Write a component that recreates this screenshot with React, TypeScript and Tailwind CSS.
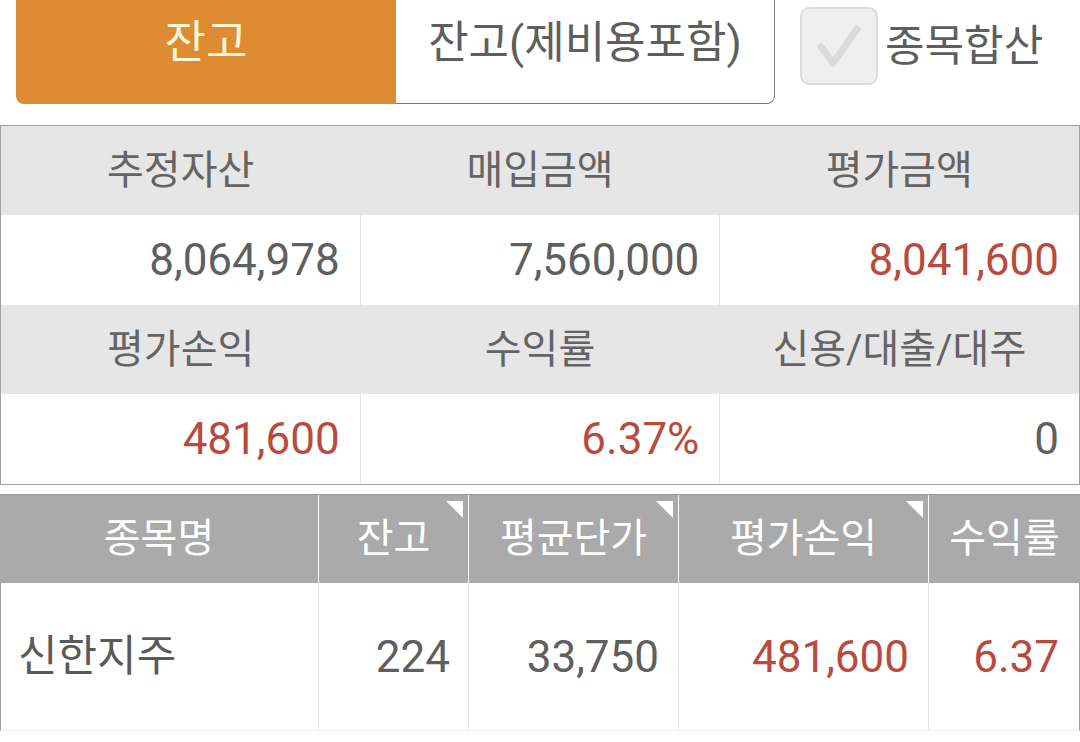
import React from 'react'

const RED = 'text-[#b84b3e]'

const summary = [
  [
    { label: '추정자산', value: '8,064,978', red: false },
    { label: '매입금액', value: '7,560,000', red: false },
    { label: '평가금액', value: '8,041,600', red: true },
  ],
  [
    { label: '평가손익', value: '481,600', red: true },
    { label: '수익률', value: '6.37%', red: true },
    { label: '신용/대출/대주', value: '0', red: false },
  ],
]

const columns = [
  { label: '종목명', width: 'w-[319px]', sort: false },
  { label: '잔고', width: 'w-[150px]', sort: true },
  { label: '평균단가', width: 'w-[210px]', sort: true },
  { label: '평가손익', width: 'w-[250px]', sort: true },
  { label: '수익률', width: 'flex-1', sort: false },
]

const rows = [
  { name: '신한지주', qty: '224', avg: '33,750', pl: '481,600', rate: '6.37' },
]

function SortMark() {
  return (
    <svg className="absolute right-[5px] top-[6px]" width="17" height="17" viewBox="0 0 17 17">
      <polygon points="0,0 17,0 17,17" fill="#ffffff" />
    </svg>
  )
}

export default function App() {
  return (
    <div className="w-[1080px] h-[742px] overflow-hidden bg-white font-['Roboto','Noto_Sans_CJK_KR',sans-serif] text-[#666666]">
      {/* Top tabs */}
      <div className="flex items-start h-[104px]">
        <div className="ml-[16px] flex h-[104px] w-[759px]">
          <div className="flex w-[380px] items-center justify-center rounded-bl-[8px] bg-[#dd8c31] pb-[18px] text-[45px] text-[#fdf3d6]">
            잔고
          </div>
          <div className="flex flex-1 items-center justify-center rounded-br-[8px] border-r border-b border-[#7a7a7a] pb-[18px] text-[44px] text-[#5e5e5e]">
            잔고(제비용포함)
          </div>
        </div>
        <div className="ml-[25px] mt-[7px] flex items-center gap-[7px]">
          <div className="relative h-[78px] w-[78px] rounded-[9px] border-2 border-[#dcdcdc] bg-[#efefef]">
            <svg className="absolute left-[-2px] top-[-2px]" width="78" height="78" viewBox="0 0 78 78">
              <polyline
                points="21,40 33,56 57,22"
                fill="none"
                stroke="#dadada"
                strokeWidth="7"
                strokeLinecap="round"
                strokeLinejoin="round"
              />
            </svg>
          </div>
          <span className="text-[43px] text-[#5e5e5e]">종목합산</span>
        </div>
      </div>

      {/* Summary */}
      <div className="mt-[21px] w-[1080px] border border-[#a0a0a0]">
        {summary.map((group, gi) => (
          <div key={gi}>
            <div className="flex h-[89px] bg-[#e6e6e6]">
              {group.map((c) => (
                <div key={c.label} className="flex flex-1 items-center justify-center text-[40px] text-[#646464]">
                  {c.label}
                </div>
              ))}
            </div>
            <div className="flex h-[90px] bg-white">
              {group.map((c, i) => (
                <div
                  key={c.label}
                  className={`flex flex-1 items-center justify-end pr-[20px] text-[44px] ${
                    i < 2 ? 'border-r border-[#e4e4e4]' : ''
                  } ${c.red ? RED : 'text-[#5f5f5f]'}`}
                >
                  {c.value}
                </div>
              ))}
            </div>
          </div>
        ))}
      </div>

      {/* Holdings */}
      <div className="mt-[9px] w-[1080px]">
        <div className="flex h-[89px] border-t border-[#999999] bg-[#aaaaaa]">
          {columns.map((col, i) => (
            <div
              key={col.label}
              className={`relative flex ${col.width} items-center justify-center text-[40px] text-white ${
                i < columns.length - 1 ? 'border-r border-white' : ''
              }`}
            >
              {col.label}
              {col.sort && <SortMark />}
            </div>
          ))}
        </div>
        {rows.map((r) => (
          <div key={r.name} className="flex h-[148px] border-x border-b border-x-[#a0a0a0] border-b-[#eeeeee] text-[44px]">
            <div className="flex w-[318px] items-center border-r border-[#e4e4e4] pl-[17px] text-[43px] text-[#5a5a5a]">
              {r.name}
            </div>
            <div className="flex w-[150px] items-center justify-end border-r border-[#e4e4e4] pr-[18px] text-[#5f5f5f]">
              {r.qty}
            </div>
            <div className="flex w-[210px] items-center justify-end border-r border-[#e4e4e4] pr-[19px] text-[#5f5f5f]">
              {r.avg}
            </div>
            <div className={`flex w-[250px] items-center justify-end border-r border-[#e4e4e4] pr-[19px] ${RED}`}>
              {r.pl}
            </div>
            <div className={`flex flex-1 items-center justify-end pr-[20px] ${RED}`}>{r.rate}</div>
          </div>
        ))}
      </div>
    </div>
  )
}
